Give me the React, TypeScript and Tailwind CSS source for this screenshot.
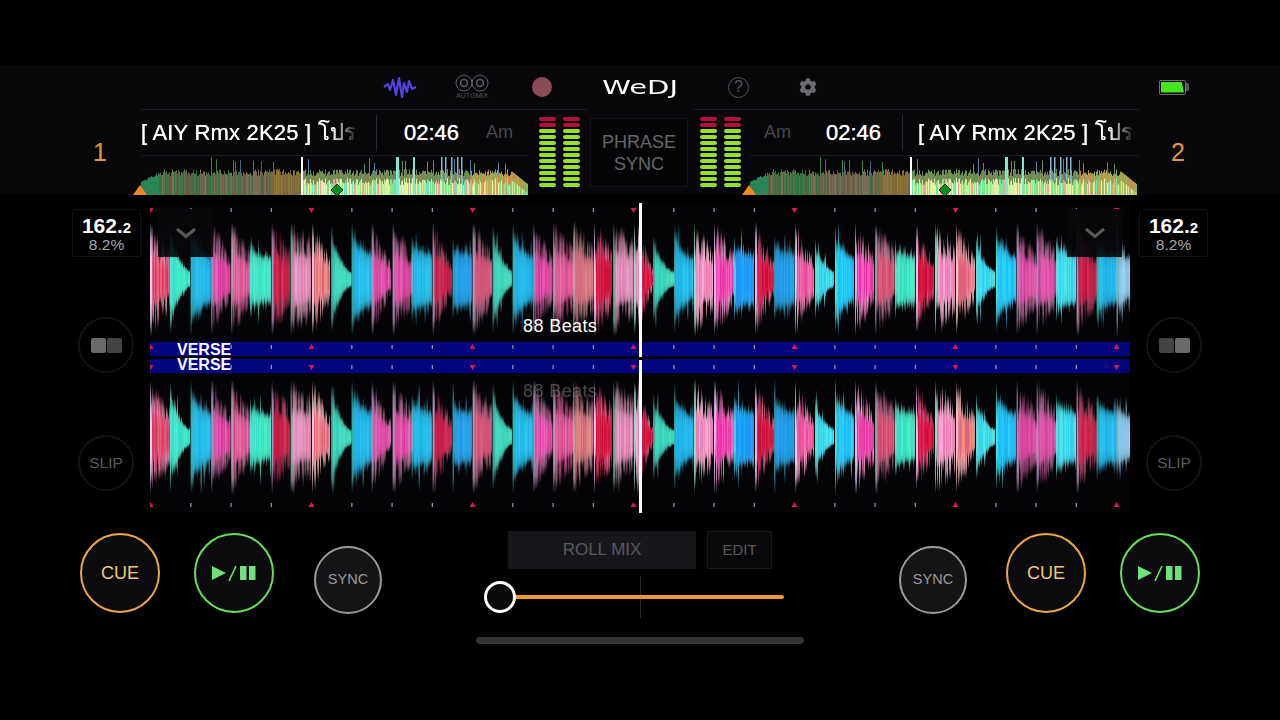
import React from "react";
import { FaCog } from "react-icons/fa";

type Seg = [number, number, string, number, number];

function rng(seed: number) {
  let a = seed;
  return () => {
    a |= 0;
    a = (a + 0x6d2b79f5) | 0;
    let t = Math.imul(a ^ (a >>> 15), 1 | a);
    t = (t + Math.imul(t ^ (t >>> 7), 61 | t)) ^ t;
    return ((t ^ (t >>> 14)) >>> 0) / 4294967296;
  };
}

const SEGS: Seg[] = [
  [0, 58, "pr", 170, 100], [60, 120, "t", 165, 30], [122, 182, "b", 170, 95], [184, 240, "m", 170, 80],
  [244, 300, "p", 170, 90], [300, 362, "t", 115, 90], [365, 418, "r", 170, 95], [422, 482, "l", 170, 130],
  [486, 540, "s", 170, 70], [544, 602, "t", 160, 28], [605, 665, "b", 170, 100], [665, 722, "m", 170, 50],
  [728, 785, "m", 170, 90], [785, 845, "b", 130, 100], [848, 905, "r", 172, 50], [908, 965, "d", 120, 100],
  [968, 1025, "pr", 170, 100], [1028, 1085, "t", 160, 30], [1088, 1148, "b", 170, 90], [1150, 1205, "m", 170, 80],
  [1210, 1268, "p", 170, 100], [1270, 1330, "s", 170, 110], [1332, 1386, "r", 170, 100], [1390, 1450, "l", 170, 120],
  [1452, 1470, "l", 170, 170],
  [1470, 1508, "r", 140, 30], [1510, 1570, "t", 130, 30], [1573, 1630, "b", 160, 80], [1632, 1688, "l", 172, 100],
  [1692, 1750, "m", 172, 90], [1752, 1812, "d", 130, 100], [1815, 1870, "r", 170, 60], [1873, 1932, "d", 130, 100],
  [1935, 1992, "p", 170, 60], [1995, 2052, "c", 120, 30], [2055, 2112, "b", 160, 90], [2115, 2172, "m", 172, 80],
  [2176, 2232, "pr", 170, 100], [2235, 2295, "t", 120, 90], [2298, 2352, "r", 160, 60], [2355, 2415, "l", 170, 110],
  [2418, 2475, "s", 170, 70], [2478, 2535, "c", 130, 30], [2538, 2598, "b", 160, 90], [2600, 2658, "m", 170, 90],
  [2660, 2715, "m", 170, 100], [2718, 2776, "c", 130, 100], [2780, 2838, "r", 170, 90], [2840, 2898, "b", 130, 100],
  [2900, 2940, "w", 120, 80],
];

const COLORS: Record<string, { tip: string[]; core: string[]; head: string }> = {
  p: { tip: ["#e77bab", "#d95d96", "#f09cc0", "#c9427f"], core: ["#ef5fa3", "#e84f96", "#f56fb4"], head: "#e9c9e8" },
  pr: { tip: ["#e07aa5", "#d55a8a", "#ec9ab8"], core: ["#d93a62", "#e04a70", "#e8607f"], head: "#d8d0f4" },
  m: { tip: ["#db6ba8", "#c84f97", "#ea9ccf"], core: ["#f030a8", "#ea3fa6", "#f75ac0"], head: "#d9b8f0" },
  r: { tip: ["#d8406e", "#c22a56", "#e36a8e"], core: ["#d4143f", "#c80f38", "#e0204f"], head: "#e0c0f0" },
  l: { tip: ["#ecaac6", "#e58db4", "#f3c0d8"], core: ["#f08abf", "#ee7ab0", "#f8a8d8"], head: "#90e0c4" },
  s: { tip: ["#e8a0a8", "#dc8090", "#eeb4b4"], core: ["#e87888", "#e0607a", "#ec9080"], head: "#f0c8c8" },
  t: { tip: ["#50dcc0", "#66e4cc", "#3ccfb4"], core: ["#3fe8c6", "#4cecc8", "#36e0c8"], head: "#58e0d0" },
  c: { tip: ["#44d8e8", "#5ce4e4", "#38c8e0"], core: ["#40dcf0", "#50e4ec", "#30d0f0"], head: "#60e0d8" },
  b: { tip: ["#30c8f0", "#44d8f0", "#20b0f0"], core: ["#18c4fa", "#20b8f8", "#2cd0f8"], head: "#48e0d0" },
  d: { tip: ["#38c4f4", "#30b0f4", "#48d0f0"], core: ["#1e98f8", "#2490f4", "#18aaf8"], head: "#40d0e8" },
  w: { tip: ["#9cd8f8", "#a8e0fa", "#88ccf4"], core: ["#90d0fa", "#a0d8fa", "#80c8f8"], head: "#b0e0f0" },
};

const ALL_COLORS = Array.from(
  new Set(Object.values(COLORS).flatMap((c) => [...c.tip, ...c.core, c.head]))
);

function Wave({ seed, cy, h }: { seed: number; cy: number; h: number }) {
  const r = rng(seed);
  const els: React.ReactNode[] = [];
  const gid = (col: string) => `w${seed}${col.slice(1)}`;
  SEGS.forEach((s, si) => {
    const x0 = s[0] / 3;
    const x1 = s[1] / 3;
    const c = COLORS[s[2]];
    const soft = "tcbdw".includes(s[2]);
    for (let x = x0; x < x1; x += 1) {
      const t = (x - x0) / (x1 - x0);
      const env = (s[4] + (s[3] - s[4]) * Math.pow(1 - t, soft ? 1.7 : 0.95)) / 3;
      const noise = () => {
        if (soft) return 0.72 + r() * 0.3;
        const v = 0.82 + r() * 0.24;
        return r() > 0.68 ? v * (0.5 + r() * 0.3) : v;
      };
      let up = env * noise();
      let dn = env * noise();
      if (x === x0) {
        up = s[3] / 3;
        dn = s[3] / 3;
      }
      if (soft && r() > 0.9) {
        const k = 1.2 + r() * 0.3;
        up = Math.min(58, up * k);
        dn = Math.min(58, dn * k);
      }
      up = Math.min(up, 60);
      dn = Math.min(dn, 60);
      const tip = x - x0 < 2 ? c.head : c.tip[Math.floor(r() * c.tip.length)];
      const core = c.core[Math.floor(r() * c.core.length)];
      els.push(
        <rect key={`a${si}-${x}`} x={x} y={cy - up} width={1} height={up + dn} fill={`url(#${gid(tip)})`} />
      );
      if (x - x0 >= 2) {
        const k = soft ? 0.8 : 0.55;
        const e = env * k;
        els.push(<rect key={`b${si}-${x}`} x={x} y={cy - e} width={1} height={e * 2} fill={`url(#${gid(core)})`} />);
      }
    }
  });
  return (
    <svg width={980} height={h} viewBox={`0 0 980 ${h}`} className="block blur-[0.6px]">
      <defs>
        {ALL_COLORS.map((col) => (
          <linearGradient key={col} id={gid(col)} x1="0" y1="0" x2="0" y2="1">
            <stop offset="0" stopColor={col} stopOpacity="0" />
            <stop offset="0.14" stopColor={col} stopOpacity="0.75" />
            <stop offset="0.32" stopColor={col} stopOpacity="1" />
            <stop offset="0.68" stopColor={col} stopOpacity="1" />
            <stop offset="0.86" stopColor={col} stopOpacity="0.75" />
            <stop offset="1" stopColor={col} stopOpacity="0" />
          </linearGradient>
        ))}
      </defs>
      {els}
    </svg>
  );
}

function Ticks({ y, dir, h }: { y: number; dir: 1 | -1; h: number }) {
  const els: React.ReactNode[] = [];
  for (let i = 0; i < 25; i++) {
    const x = i * 40.25 + 0.5;
    if (i % 4 === 0) {
      els.push(<polygon key={i} points={`${x - 3},${y - 2 * dir} ${x + 3},${y - 2 * dir} ${x},${y + 3 * dir}`} fill="#d41a50" />);
    } else {
      els.push(<rect key={i} x={x - 0.5} y={y - 2} width={1.2} height={4} fill="#9a9aac" />);
    }
  }
  return (
    <svg width={980} height={h} viewBox={`0 0 980 ${h}`} className="block">
      {els}
    </svg>
  );
}

function Overview({ seed }: { seed: number }) {
  const r = rng(seed);
  const els: React.ReactNode[] = [];
  const W = 387;
  const H = 39;
  const muted = ["#857650", "#94836a", "#5f8552", "#35904f", "#97876f", "#6f8f60"];
  const warm = ["#a88c42", "#9c8048", "#b89a40"];
  const bright = ["#d8eca0", "#f0f0a4", "#70e88c", "#e8a898", "#c0f098", "#6ee8b8", "#e4f4bc", "#86ec86"];
  const end = ["#c8aa50", "#d89c58", "#b8bc58", "#98c468"];
  for (let x = 0; x < W; x++) {
    let top = 13 + r() * 7;
    if (x < 18) top = 24 - (x / 18) * 8 + r() * 3;
    if (x > 370) top = 15 + (x - 370) * 0.8;
    let upper: string;
    let lower: string;
    if (x < 18) {
      upper = lower = "#34a46c";
    } else if (x < 130) {
      upper = lower = muted[Math.floor(r() * muted.length)];
    } else if (x < 160) {
      upper = lower = warm[Math.floor(r() * warm.length)];
    } else if (x < 330) {
      upper = r() > 0.5 ? "#8f9a5c" : "#6f9a5c";
      lower = bright[Math.floor(r() * bright.length)];
    } else {
      upper = end[Math.floor(r() * end.length)];
      lower = r() > 0.5 ? end[Math.floor(r() * end.length)] : bright[Math.floor(r() * bright.length)];
    }
    els.push(<rect key={`u${x}`} x={x} y={top} width={1} height={H - top} fill={upper} opacity={x < 160 ? 0.8 : 0.9} />);
    if (x >= 160) els.push(<rect key={`l${x}`} x={x} y={top + 9} width={1} height={H - top - 9} fill={lower} />);
    if (x > 60 && x < 372 && r() > 0.92) {
      const tall = 1 + r() * 8;
      const col = x < 160 ? (r() > 0.5 ? "#506480" : "#38854a") : r() > 0.5 ? "#5f9070" : "#5880a0";
      els.push(<rect key={`s${x}`} x={x} y={tall} width={1} height={H - tall - 20} fill={col} />);
    }
  }
  [160, 161, 255, 256, 257, 272, 273].forEach((x) =>
    els.push(<rect key={`w${x}`} x={x} y={1} width={1} height={H - 1} fill={x < 200 ? "#ffffff" : "#80e8d0"} />)
  );
  [300, 304, 310, 316, 320].forEach((x) =>
    els.push(<rect key={`v${x}`} x={x} y={1} width={1.5} height={24} fill="#88b4cc" />)
  );
  return (
    <svg width={W} height={H} viewBox={`0 0 ${W} ${H}`} className="block blur-[0.4px]">
      {els}
    </svg>
  );
}

function Marker({ left }: { left: number }) {
  return (
    <svg width={16} height={16} viewBox="0 0 16 16" className="absolute" style={{ left, top: 27 }}>
      <polygon points="8,1 14,7 8,13 2,7" fill="#0f8a1e" stroke="#0b3d12" strokeWidth="1" />
    </svg>
  );
}

function Tri({ left }: { left: number }) {
  return (
    <svg width={14} height={10} viewBox="0 0 14 10" className="absolute" style={{ left, top: 29 }}>
      <polygon points="7,0 14,10 0,10" fill="#f08a20" />
    </svg>
  );
}

function Meter() {
  const bars = Array.from({ length: 12 }, (_, i) => i);
  return (
    <div className="flex flex-col gap-[2px]">
      {bars.map((i) => (
        <div key={i} className={`w-[17px] h-[4px] rounded-[2px] ${i < 2 ? "bg-[#b50f40]" : "bg-[#9ade2c]"}`} />
      ))}
    </div>
  );
}

function Title() {
  return (
    <div className="w-[217px] overflow-hidden whitespace-nowrap text-[22px] leading-[26px] tracking-[0.2px] text-white [text-shadow:0_0_0.7px_#fff] [mask-image:linear-gradient(to_right,black_88%,transparent)]">
      [ AIY Rmx 2K25 ] โปรด
    </div>
  );
}

function Bpm() {
  return (
    <div className="w-[69px] h-[48px] border border-[#121214] rounded-[2px] flex flex-col items-center justify-center">
      <div className="text-white font-bold text-[21px] leading-[20px] pt-[2px]">
        162.<span className="text-[15px]">2</span>
      </div>
      <div className="text-[#a8a8a8] text-[15.5px] leading-[14px]">8.2%</div>
    </div>
  );
}

function Toggle({ right }: { right?: boolean }) {
  return (
    <div className="w-[56px] h-[56px] rounded-full border-2 border-[#141416] flex items-center justify-center gap-[1px]">
      <div className={`w-[15px] h-[15px] rounded-[2px] ${right ? "bg-[#444444]" : "bg-[#6a6a6a]"}`} />
      <div className={`w-[15px] h-[15px] rounded-[2px] ${right ? "bg-[#6a6a6a]" : "bg-[#444444]"}`} />
    </div>
  );
}

function Slip() {
  return (
    <div className="w-[56px] h-[56px] rounded-full border-2 border-[#141416] flex items-center justify-center text-[#5a5a5a] text-[15.5px]">
      SLIP
    </div>
  );
}

function Cue() {
  return (
    <div className="w-[80px] h-[80px] rounded-full border-[2.5px] border-[#eaa84a] bg-[#0c0c0f] flex items-center justify-center text-[#eec67e] text-[18px]">
      CUE
    </div>
  );
}

function Play() {
  return (
    <div className="w-[80px] h-[80px] rounded-full border-[2.5px] border-[#68df58] bg-[#0c0c0f] flex items-center justify-center">
      <svg width={46} height={18} viewBox="0 0 46 18">
        <polygon points="1,2 15,9 1,16" fill="#6fe07a" />
        <line x1="18" y1="17" x2="25" y2="2" stroke="#6fe07a" strokeWidth="1.6" />
        <rect x="29" y="2" width="6.5" height="14" fill="#6fe07a" />
        <rect x="38" y="2" width="6.5" height="14" fill="#6fe07a" />
      </svg>
    </div>
  );
}

function Sync() {
  return (
    <div className="w-[68px] h-[68px] rounded-full border-2 border-[#9a9a9a] bg-[#141417] flex items-center justify-center text-[#9a9a9a] text-[14.5px]">
      SYNC
    </div>
  );
}

function Chevron() {
  return (
    <svg width={22} height={12} viewBox="0 0 22 12">
      <polyline points="2,2 11,9.5 20,2" fill="none" stroke="#5a5a5c" strokeWidth="3" />
    </svg>
  );
}

export default function App() {
  return (
    <div className="w-[1280px] h-[720px] bg-black overflow-hidden flex flex-col font-['Liberation_Sans','Noto_Sans','DejaVu_Sans',sans-serif]">
      <div className="h-[65px] shrink-0" />

      <header className="h-[130px] shrink-0 bg-[#070709] flex flex-col">
        <div className="h-[44px] flex items-center relative">
          <svg width={34} height={24} viewBox="0 0 34 24" className="ml-[383px]">
            <polyline
              points="1,12 5,9 7,15 10,5 13,20 16,3 19,22 21,8 24,17 26,6 29,14 33,12"
              fill="none"
              stroke="#5442e0"
              strokeWidth="2.2"
              strokeLinejoin="round"
            />
          </svg>
          <div className="ml-[38px] w-[34px] flex flex-col items-center">
            <svg width={34} height={18} viewBox="0 0 34 18">
              <g fill="none" stroke="#5e5e62" strokeWidth="1">
                <circle cx="9" cy="9" r="8" />
                <circle cx="25" cy="9" r="8" />
                <circle cx="9" cy="9" r="3.5" strokeWidth="1.6" />
                <circle cx="25" cy="9" r="3.5" strokeWidth="1.6" />
              </g>
            </svg>
            <span className="text-[7px] leading-[8px] text-[#55555a]">AUTOMIX</span>
          </div>
          <div className="ml-[43px] w-5 h-5 rounded-full bg-[#8c4a57]" />
          <div className="ml-[49px] w-[78px] flex justify-center">
            <span className="font-['DejaVu_Sans',sans-serif] text-white text-[20px] leading-[24px] scale-x-[1.45] inline-block">
              WeDJ
            </span>
          </div>
          <div className="ml-[49px] w-[21px] h-[21px] rounded-full border border-[#58585c] flex items-center justify-center text-[#58585c] text-[16px] leading-none">
            ?
          </div>
          <FaCog className="ml-[50px] text-[#6c6c70]" size={18} />
          <div className="ml-[342px] w-[30px] h-[15px] flex items-center">
            <div className="w-[27px] h-[15px] border border-[#707074] rounded-[2px] p-[1px]">
              <div className="w-full h-full bg-[#44e81c] [clip-path:polygon(0_0,90%_0,100%_100%,0_100%)]" />
            </div>
            <div className="w-[3px] h-[8px] bg-[#55555a] rounded-r-[1px]" />
          </div>
        </div>

        <div className="flex flex-1">
          <div className="w-[141px] flex items-center justify-end pr-[34px] text-[#e8963c] text-[25px] leading-none">1</div>

          <div className="w-[446px] border-t border-[#1c1c20] flex">
            <div className="w-[387px]">
              <div className="h-[46px] border-b border-[#1c1c20] flex items-center">
                <Title />
                <div className="ml-[18px] w-px h-[36px] bg-[#2a2a2e]" />
                <div className="ml-[27px] text-white text-[22px] [text-shadow:0_0_0.7px_#fff]">02:46</div>
                <div className="ml-[27px] text-[#48484c] text-[18px]">Am</div>
              </div>
              <div className="relative h-[39px]">
                <Overview seed={11} />
                <Tri left={-8} />
                <Marker left={188} />
              </div>
            </div>
            <div className="ml-[11px] mt-[7px] flex gap-[7px]">
              <Meter />
              <Meter />
            </div>
          </div>

          <div className="w-[98px] ml-[3px] mt-[9px] h-[69px] border border-[#141418] bg-[#050507] flex flex-col items-center justify-center text-[#666669] text-[18px] leading-[22px]">
            <span>PHRASE</span>
            <span>SYNC</span>
          </div>

          <div className="w-[445px] ml-[6px] border-t border-[#1c1c20] flex">
            <div className="ml-[6px] mt-[7px] flex gap-[7px]">
              <Meter />
              <Meter />
            </div>
            <div className="ml-[9px] w-[389px]">
              <div className="h-[46px] border-b border-[#1c1c20] flex items-center">
                <div className="ml-[14px] text-[#48484c] text-[18px]">Am</div>
                <div className="ml-[35px] text-white text-[22px] [text-shadow:0_0_0.7px_#fff]">02:46</div>
                <div className="ml-[21px] w-px h-[36px] bg-[#2a2a2e]" />
                <div className="ml-[15px]">
                  <Title />
                </div>
              </div>
              <div className="relative h-[39px]">
                <Overview seed={11} />
                <Tri left={-8} />
                <Marker left={187} />
              </div>
            </div>
          </div>

          <div className="flex-1 flex items-center pl-[32px] text-[#e8963c] text-[25px] leading-none">2</div>
        </div>
      </header>

      <main className="h-[318px] shrink-0 flex">
        <div className="w-[150px] shrink-0 pt-[14px] flex flex-col">
          <div className="ml-[72px]">
            <Bpm />
          </div>
          <div className="ml-[78px] mt-[60px]">
            <Toggle />
          </div>
          <div className="ml-[78px] mt-[62px]">
            <Slip />
          </div>
        </div>

        <div className="w-[980px] shrink-0 mt-[8px] relative bg-[#040406] flex flex-col">
          <div className="h-[139px] relative">
            <div className="absolute inset-0">
              <Ticks y={7} dir={1} h={139} />
            </div>
            <div className="absolute inset-0">
              <Wave seed={5} cy={76} h={139} />
            </div>
          </div>
          <div className="h-[31px] relative flex flex-col gap-[3px] text-white font-bold text-[16px]">
            <div className="h-[14px] bg-[#04047e] leading-[15px] pl-[27px]">VERSE</div>
            <div className="h-[14px] bg-[#04047e] leading-[12px] pl-[27px]">VERSE</div>
            <div className="absolute left-0 top-[2px]">
              <Ticks y={3} dir={-1} h={8} />
            </div>
            <div className="absolute left-0 top-[21px]">
              <Ticks y={4} dir={1} h={8} />
            </div>
          </div>
          <div className="h-[140px] relative">
            <div className="absolute inset-0">
              <Ticks y={132} dir={-1} h={140} />
            </div>
            <div className="absolute inset-0">
              <Wave seed={77} cy={64} h={140} />
            </div>
          </div>

          <div className="absolute left-[373px] top-[113px] text-white text-[18px] leading-[20px] tracking-[0.4px]">88 Beats</div>
          <div className="absolute left-[373px] top-[178px] text-[#777777] opacity-60 text-[18px] leading-[20px] tracking-[0.4px]">88 Beats</div>

          <div className="absolute left-[489px] top-0 w-[2.5px] h-[310px] bg-white" />
          <div className="absolute left-[488px] top-[154px] w-[5px] h-[3px] bg-black" />

          <div className="absolute left-[8px] top-[6px] w-[55px] h-[48px] bg-[#08080a]/90 flex items-center justify-center">
            <Chevron />
          </div>
          <div className="absolute left-[917px] top-[6px] w-[55px] h-[48px] bg-[#08080a]/90 flex items-center justify-center">
            <Chevron />
          </div>
        </div>

        <div className="flex-1 pt-[14px] flex flex-col">
          <div className="ml-[9px]">
            <Bpm />
          </div>
          <div className="ml-[16px] mt-[60px]">
            <Toggle right />
          </div>
          <div className="ml-[16px] mt-[62px]">
            <Slip />
          </div>
        </div>
      </main>

      <footer className="flex-1 flex">
        <div className="w-[382px] shrink-0 pl-[80px] pt-[20px] flex items-start">
          <Cue />
          <div className="ml-[34px]">
            <Play />
          </div>
          <div className="ml-[40px] mt-[13px]">
            <Sync />
          </div>
        </div>

        <div className="w-[517px] shrink-0 flex flex-col">
          <div className="mt-[18px] ml-[126px] flex gap-[11px]">
            <div className="w-[188px] h-[38px] bg-[#17171b] flex items-center justify-center text-[#5a5a5e] text-[17px]">ROLL MIX</div>
            <div className="w-[65px] h-[38px] border border-[#19191c] bg-[#08080a] flex items-center justify-center text-[#5a5a5e] text-[15px]">EDIT</div>
          </div>
          <div className="relative mt-[12px] ml-[102px] w-[300px] h-[32px] flex items-center">
            <div className="absolute left-[156px] top-[-5px] w-px h-[42px] bg-[#2a2a2e]" />
            <div className="relative w-[32px] h-[32px] rounded-full border-[3px] border-white bg-[#0a0a0c] shrink-0" />
            <div className="relative flex-1 h-[4px] bg-[#ee9a35] rounded-r-full" />
          </div>
          <div className="mt-[24px] ml-[94px] w-[328px] h-[7px] rounded-full bg-[#333335]" />
        </div>

        <div className="flex-1 pt-[20px] flex items-start">
          <div className="mt-[13px]">
            <Sync />
          </div>
          <div className="ml-[39px]">
            <Cue />
          </div>
          <div className="ml-[34px]">
            <Play />
          </div>
        </div>
      </footer>
    </div>
  );
}
